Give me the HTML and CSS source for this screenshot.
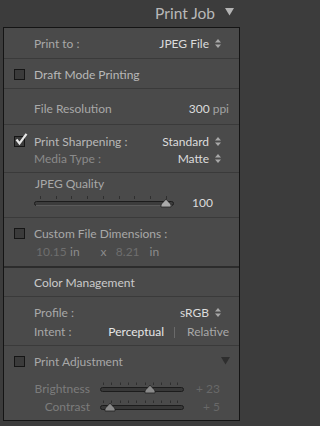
FILE: index.html
```html
<!DOCTYPE html>
<html>
<head>
<meta charset="utf-8">
<link rel="stylesheet" href="styles.css">
</head>
<body>
<div class="header">
  <span class="title">Print Job</span>
  <svg class="tri" width="9" height="8" viewBox="0 0 9 8"><path d="M0 0 H9 L4.5 7.5 Z" fill="#b4b4b4"/></svg>
</div>
<div class="panel">
  <div class="row r1">
    <span class="lbl">Print to :</span>
    <span class="val">JPEG File <svg class="ud" width="6" height="9" viewBox="0 0 6 9"><path d="M0 3.5 L3 0 L6 3.5 Z M0 5.5 L3 9 L6 5.5 Z" fill="#a8a8a8"/></svg></span>
  </div>
  <div class="sep"></div>
  <div class="row r2">
    <span class="cb"></span><span class="lbl bright">Draft Mode Printing</span>
  </div>
  <div class="sep"></div>
  <div class="row r3">
    <span class="lbl">File Resolution</span>
    <span class="val v-end"><b>300</b> ppi</span>
  </div>
  <div class="sep"></div>
  <div class="blk r4">
    <div class="line first">
      <span class="cb checked"><svg class="chk" width="13" height="13" viewBox="0 0 13 13"><path d="M1.5 6.5 L4.5 10.5 L11.5 0.8" fill="none" stroke="#e6e6e6" stroke-width="2.2"/></svg></span>
      <span class="lbl bright">Print Sharpening :</span>
      <span class="val">Standard <svg class="ud" width="6" height="9" viewBox="0 0 6 9"><path d="M0 3.5 L3 0 L6 3.5 Z M0 5.5 L3 9 L6 5.5 Z" fill="#a8a8a8"/></svg></span>
    </div>
    <div class="line">
      <span class="lbl dim">Media Type :</span>
      <span class="val">Matte <svg class="ud" width="6" height="9" viewBox="0 0 6 9"><path d="M0 3.5 L3 0 L6 3.5 Z M0 5.5 L3 9 L6 5.5 Z" fill="#a8a8a8"/></svg></span>
    </div>
  </div>
  <div class="sep"></div>
  <div class="blk r5">
    <div class="line qlbl"><span class="lbl">JPEG Quality</span></div>
    <div class="line slrow">
      <svg class="slider" width="140" height="14" viewBox="0 0 140 14">
        <g stroke="#2f2f2f" stroke-width="1">
          <line x1="6.5" y1="1" x2="6.5" y2="4"/><line x1="22.5" y1="1" x2="22.5" y2="4"/><line x1="37.5" y1="1" x2="37.5" y2="4"/><line x1="53.5" y1="1" x2="53.5" y2="4"/><line x1="69.5" y1="1" x2="69.5" y2="4"/><line x1="85.5" y1="1" x2="85.5" y2="4"/><line x1="100.5" y1="1" x2="100.5" y2="4"/><line x1="116.5" y1="1" x2="116.5" y2="4"/><line x1="132.5" y1="1" x2="132.5" y2="4"/>
        </g>
        <rect x="0.5" y="6.5" width="139" height="4" rx="2" fill="#3c3c3c" stroke="#1c1c1c"/>
        <line x1="2" y1="10.5" x2="138" y2="10.5" stroke="#5a5a5a"/>
        <path d="M127 12 L127 10 Q127.5 8 130 6.5 L132 4 L134 6.5 Q136.5 8 137 10 L137 12 Z" fill="#a9a9a9" stroke="#222" stroke-width="0.8"/>
      </svg>
      <span class="num">100</span>
    </div>
  </div>
  <div class="sep"></div>
  <div class="blk r6">
    <div class="line first"><span class="cb"></span><span class="lbl">Custom File Dimensions :</span></div>
    <div class="line dims">
      <span class="dv dv1">10.15</span><span class="du">in</span>
      <span class="dx">x</span>
      <span class="dv dv2">8.21</span><span class="du du2">in</span>
    </div>
  </div>
  <div class="sep dark"></div>
  <div class="row r7">
    <span class="lbl head">Color Management</span>
  </div>
  <div class="sep"></div>
  <div class="blk r8">
    <div class="line">
      <span class="lbl">Profile :</span>
      <span class="val">sRGB <svg class="ud" width="6" height="9" viewBox="0 0 6 9"><path d="M0 3.5 L3 0 L6 3.5 Z M0 5.5 L3 9 L6 5.5 Z" fill="#a8a8a8"/></svg></span>
    </div>
    <div class="line">
      <span class="lbl">Intent :</span>
      <span class="intent"><span class="perc">Perceptual</span><span class="bar"></span><span class="rel">Relative</span></span>
    </div>
  </div>
  <div class="sep"></div>
  <div class="blk r9">
    <div class="line first adjhead">
      <span class="cb"></span><span class="lbl">Print Adjustment</span>
      <svg class="tri2" width="9" height="8" viewBox="0 0 9 8"><path d="M0 0 H9 L4.5 7.5 Z" fill="#2e2e2e"/></svg>
    </div>
    <div class="line adj adj1">
      <span class="alb">Brightness</span>
      <svg class="slider2" width="84" height="12" viewBox="0 0 84 12">
        <g stroke="#2f2f2f" stroke-width="1">
          <line x1="3.5" y1="0.5" x2="3.5" y2="3"/><line x1="11.5" y1="0.5" x2="11.5" y2="3"/><line x1="20.5" y1="0.5" x2="20.5" y2="3"/><line x1="28.5" y1="0.5" x2="28.5" y2="3"/><line x1="36.5" y1="0.5" x2="36.5" y2="3"/><line x1="45.5" y1="0.5" x2="45.5" y2="3"/><line x1="53.5" y1="0.5" x2="53.5" y2="3"/><line x1="61.5" y1="0.5" x2="61.5" y2="3"/><line x1="70.5" y1="0.5" x2="70.5" y2="3"/><line x1="77.5" y1="0.5" x2="77.5" y2="3"/>
        </g>
        <rect x="0.5" y="5.5" width="83" height="4" rx="2" fill="#383838" stroke="#1c1c1c"/>
        <path d="M45 11 L45 9 Q45.5 7 48 5.5 L50 3 L52 5.5 Q54.5 7 55 9 L55 11 Z" fill="#8a8a8a" stroke="#222" stroke-width="0.8"/>
      </svg>
      <span class="anum">+ 23</span>
    </div>
    <div class="line adj">
      <span class="alb">Contrast</span>
      <svg class="slider2" width="84" height="12" viewBox="0 0 84 12">
        <g stroke="#2f2f2f" stroke-width="1">
          <line x1="3.5" y1="0.5" x2="3.5" y2="3"/><line x1="11.5" y1="0.5" x2="11.5" y2="3"/><line x1="20.5" y1="0.5" x2="20.5" y2="3"/><line x1="28.5" y1="0.5" x2="28.5" y2="3"/><line x1="36.5" y1="0.5" x2="36.5" y2="3"/><line x1="45.5" y1="0.5" x2="45.5" y2="3"/><line x1="53.5" y1="0.5" x2="53.5" y2="3"/><line x1="61.5" y1="0.5" x2="61.5" y2="3"/><line x1="70.5" y1="0.5" x2="70.5" y2="3"/><line x1="77.5" y1="0.5" x2="77.5" y2="3"/>
        </g>
        <rect x="0.5" y="5.5" width="83" height="4" rx="2" fill="#383838" stroke="#1c1c1c"/>
        <path d="M5 11 L5 9 Q5.5 7 8 5.5 L10 3 L12 5.5 Q14.5 7 15 9 L15 11 Z" fill="#8a8a8a" stroke="#222" stroke-width="0.8"/>
      </svg>
      <span class="anum">+ 5</span>
    </div>
  </div>
</div>
</body>
</html>
```

FILE: styles.css
```css
html, body {
  margin: 0;
  padding: 0;
  background: #3c3c3c;
  width: 243px;
  height: 426px;
  overflow: hidden;
  font-family: "Lato", "Open Sans", sans-serif;
  font-size: 12px;
  color: #a8a8a8;
}
.header {
  height: 27px;
  display: flex;
  align-items: center;
  justify-content: flex-end;
  padding-right: 9px;
  box-sizing: border-box;
}
.title {
  font-size: 15.5px;
  color: #b8b8b8;
  margin-right: 10px;
  margin-top: -2px;
}
.tri { margin-top: -3px; }
.panel {
  margin-left: 3px;
  width: 237px;
  height: 394px;
  box-sizing: border-box;
  border: 1px solid #141414;
  background: #4a4a4a;
  display: flex;
  flex-direction: column;
}
.sep { height: 1px; background: #3a3a3a; flex: none; }
.sep.dark { height: 2px; background: #2c2c2c; }
.row {
  display: flex;
  align-items: center;
  justify-content: space-between;
  padding: 0 18px 0 30px;
  flex: none;
  box-sizing: border-box;
}
.r1 { height: 30px; }
.r2 { height: 29px; padding-left: 10px; justify-content: flex-start; padding-top: 1px; }
.r3 { height: 35px; padding-right: 10px; padding-top: 4px; }
.r7 { height: 28px; padding-left: 30px; }
.blk { flex: none; display: flex; flex-direction: column; box-sizing: border-box; }
.line {
  display: flex;
  align-items: center;
  justify-content: space-between;
  height: 17px;
  padding: 0 18px 0 30px;
  flex: none;
}
.line.first { padding-left: 10px; justify-content: flex-start; }
.line.first .val { margin-left: auto; }
.r4 { height: 47px; padding-top: 8px; }
.r5 { height: 44px; padding-top: 2px; }
.r5 .qlbl { height: 16px; padding-left: 31px; }
.r5 .slrow { height: 24px; justify-content: flex-start; padding-left: 30px; }
.r6 { height: 48px; padding-top: 6px; }
.r6 .line { height: 18px; }
.r8 { height: 48px; padding-top: 6px; }
.r8 .line { height: 19px; }
.r9 { flex: 1; padding-top: 6px; }
.r9 .adjhead { height: 18px; padding-right: 9px; }
.r9 .adjhead .tri2 { margin-left: auto; margin-top: -1px; }

.lbl { white-space: nowrap; }
.bright { color: #b8b8b8; }
.dim { color: #8a8a8a; }
.head { color: #cacaca; }
.val { color: #dcdcdc; display: flex; align-items: center; white-space: nowrap; }
.ud { margin-left: 6px; }
.v-end { color: #a2a2a2; }
.v-end b { font-weight: normal; color: #dcdcdc; margin-right: 3px; }

.cb {
  width: 9px;
  height: 9px;
  border: 1px solid #151515;
  background: #3b3b3b;
  margin-right: 9px;
  flex: none;
  position: relative;
}
.cb.checked .chk { position: absolute; left: 0; top: -4px; }

.slider { flex: none; margin-top: -2px; }
.num { color: #dcdcdc; margin-left: 18px; margin-top: -2px; }

.dims { justify-content: flex-start; padding-left: 32px; }
.dv { color: #6e6e6e; text-align: right; flex: none; white-space: nowrap; }
.dv1 { width: 30px; }
.dv2 { width: 33px; }
.du { color: #8c8c8c; margin-left: 4px; }
.du2 { margin-left: 10px; }
.dx { color: #8c8c8c; margin-left: 21px; }

.intent { display: flex; align-items: center; margin-right: -8px; }
.perc { color: #e6e6e6; }
.bar { width: 1px; height: 11px; background: #6a6a6a; margin: 1px 12px 0 10px; }
.rel { color: #a8a8a8; }

.adj { justify-content: flex-start; padding: 0; height: 18px; }
.adj1 { margin-top: 9px; }
.alb { width: 86px; text-align: right; color: #7c7c7c; margin-right: 10px; }
.slider2 { flex: none; }
.anum { color: #686868; width: 36px; text-align: right; }
```
